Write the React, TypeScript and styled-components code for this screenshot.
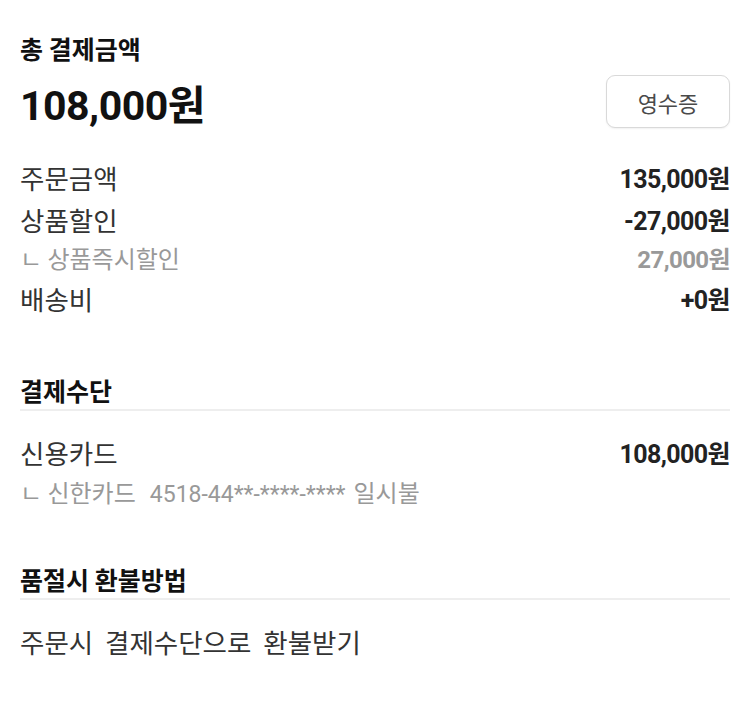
import React from "react";
import styled, { createGlobalStyle } from "styled-components";

const Global = createGlobalStyle`
  body {
    margin: 0;
    background: #fff;
    font-family: "Noto Sans CJK KR", "Noto Sans", sans-serif;
    color: #111;
  }
`;

const Page = styled.div`
  width: 750px;
  padding: 30px 20px 40px;
  box-sizing: border-box;
  display: flex;
  flex-direction: column;
`;

const Title = styled.div`
  font-size: 25px;
  font-weight: 700;
  line-height: 36px;
  color: #111;
`;

const TotalRow = styled.div`
  display: flex;
  align-items: flex-start;
  justify-content: space-between;
  margin-top: 12px;
`;

const Total = styled.div`
  font-family: Roboto, "Noto Sans CJK KR", sans-serif;
  font-size: 41px;
  font-weight: 700;
  line-height: 56px;
  letter-spacing: -0.5px;
  color: #111;
`;

const ReceiptButton = styled.button`
  width: 124px;
  height: 53px;
  margin-top: -3px;
  border: 1px solid #d9d9d9;
  border-radius: 9px;
  background: #fff;
  font-family: "Noto Sans CJK KR", sans-serif;
  font-size: 22px;
  color: #4a4a4a;
  box-shadow: 0 1px 2px rgba(0, 0, 0, 0.06);
`;

const Rows = styled.div`
  display: flex;
  flex-direction: column;
  margin-top: 22px;
`;

const Row = styled.div<{ $h: number }>`
  display: flex;
  justify-content: space-between;
  align-items: center;
  height: ${(p) => p.$h}px;
`;

const Label = styled.span<{ $sub?: boolean; $wordGap?: number }>`
  font-size: ${(p) => (p.$sub ? 24 : 26.5)}px;
  color: ${(p) => (p.$sub ? "#999" : "#333")};
  font-weight: 400;
  white-space: nowrap;
  word-spacing: ${(p) => p.$wordGap ?? 0}px;
`;

const Amount = styled.span<{ $sub?: boolean }>`
  font-family: Roboto, "Noto Sans CJK KR", sans-serif;
  font-size: ${(p) => (p.$sub ? 24 : 25)}px;
  font-weight: 700;
  letter-spacing: -0.6px;
  color: ${(p) => (p.$sub ? "#999" : "#222")};
`;

const Section = styled.section<{ $gap: number }>`
  display: flex;
  flex-direction: column;
  margin-top: ${(p) => p.$gap}px;
`;

const SectionHead = styled.div`
  font-size: 25px;
  font-weight: 700;
  line-height: 38px;
  color: #111;
  border-bottom: 2px solid #eee;
`;

const SectionBody = styled.div`
  display: flex;
  flex-direction: column;
  padding-top: 19px;
`;

const CardNumber = styled.span`
  font-family: Roboto, "Noto Sans CJK KR", sans-serif;
  font-size: 23px;
  margin: 0 8px 0 14px;
`;

export default function App() {
  return (
    <>
      <Global />
      <Page>
        <Title>총 결제금액</Title>
        <TotalRow>
          <Total>108,000원</Total>
          <ReceiptButton>영수증</ReceiptButton>
        </TotalRow>
        <Rows>
          <Row $h={42}>
            <Label>주문금액</Label>
            <Amount>135,000원</Amount>
          </Row>
          <Row $h={42}>
            <Label>상품할인</Label>
            <Amount>-27,000원</Amount>
          </Row>
          <Row $h={34}>
            <Label $sub>ㄴ 상품즉시할인</Label>
            <Amount $sub>27,000원</Amount>
          </Row>
          <Row $h={48}>
            <Label>배송비</Label>
            <Amount>+0원</Amount>
          </Row>
        </Rows>
        <Section $gap={49}>
          <SectionHead>결제수단</SectionHead>
          <SectionBody>
            <Row $h={44}>
              <Label>신용카드</Label>
              <Amount>108,000원</Amount>
            </Row>
            <Row $h={34}>
              <Label $sub>
                ㄴ 신한카드<CardNumber>4518-44**-****-****</CardNumber>일시불
              </Label>
            </Row>
          </SectionBody>
        </Section>
        <Section $gap={52}>
          <SectionHead>품절시 환불방법</SectionHead>
          <SectionBody>
            <Row $h={44}>
              <Label $wordGap={6}>주문시 결제수단으로 환불받기</Label>
            </Row>
          </SectionBody>
        </Section>
      </Page>
    </>
  );
}
